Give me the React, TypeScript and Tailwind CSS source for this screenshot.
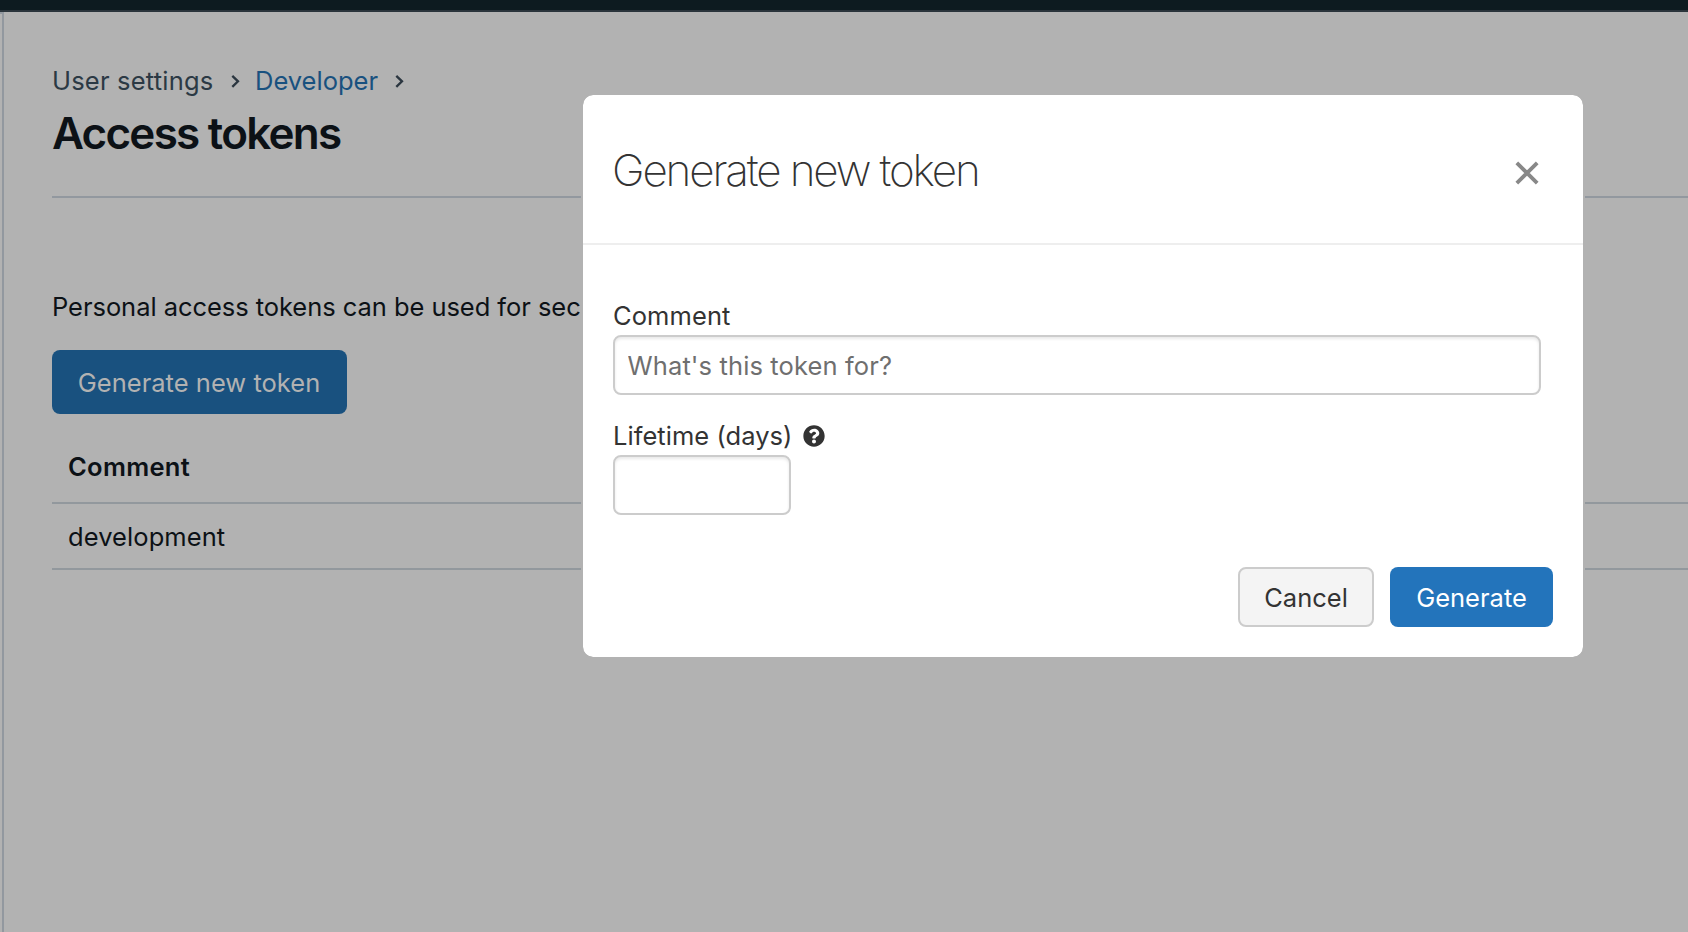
import { FaQuestionCircle } from "react-icons/fa";

function Chevron() {
  return (
    <svg className="block h-[14px] w-[10px]" viewBox="0 0 10 14" fill="none" stroke="#2b3640" strokeWidth="2.3">
      <path d="M1.3 1.8L7 7.3L1.3 12.8" />
    </svg>
  );
}

function Page() {
  return (
    <div className="flex h-full flex-col">
      <div className="h-3 shrink-0 border-b-2 border-[#2a343b] bg-[#0d1b20]" />
      <div className="flex min-h-0 flex-1">
        <aside className="w-1 shrink-0 border-t-2 border-r-2 border-[#92989f]" />
        <main className="flex flex-1 flex-col">
          <nav className="mt-[50px] flex h-[38px] items-center pl-12 text-[25.5px] text-[#2b3944]">
            <span className="w-[179px] tracking-[0.2px]">User settings</span>
            <Chevron />
            <a className="ml-[14px] w-[140px] text-[#19517f]">Developer</a>
            <Chevron />
          </nav>
          <h1 className="mt-[7px] ml-12 h-[52px] text-[44px] leading-[52px] font-semibold tracking-[-1.75px]">
            Access tokens
          </h1>
          <div className="mt-[37px] ml-12 h-0.5 bg-[#92989f]" />
          <p className="mt-[90px] ml-12 h-[38px] text-[25.5px] leading-[38px] whitespace-nowrap tracking-[-0.05px]">
            Personal access tokens can be used for sec
          </p>
          <button className="mt-6 ml-[47.5px] flex h-16 w-[295px] items-center justify-center self-start rounded-lg bg-[#19517f] pt-0.5 text-[25.5px] tracking-[0.02px] text-[#b2b2b2]">
            Generate new token
          </button>
          <div className="mt-[18px] ml-[47.5px] h-[72px] border-b-2 border-[#92989d] pl-[16.5px] text-[25.5px] leading-[70px] font-semibold tracking-[0.3px]">
            Comment
          </div>
          <div className="ml-[47.5px] h-[66px] border-b-2 border-[#92989d] pl-[16.5px] text-[25.5px] leading-[66px] tracking-[0.08px]">
            development
          </div>
        </main>
      </div>
    </div>
  );
}

function Dialog() {
  return (
    <section
      role="dialog"
      className="absolute top-[95px] left-[583px] flex h-[562px] w-[1000px] flex-col rounded-[10px] bg-white text-[25.5px] text-[#333] outline-2 outline-[#b2b2b2]"
    >
      <header className="flex h-[150px] shrink-0 items-center justify-between border-b-2 border-[#eee] pr-[44px] pl-[29px]">
        <h2 className="pt-0.5 text-[44px] font-extralight tracking-[-2.15px]">Generate new token</h2>
        <svg className="mt-2 h-6 w-6" viewBox="0 0 24 24" fill="none" stroke="#888" strokeWidth="3.8">
          <path d="M1.8 1.8L22.2 22.2M22.2 1.8L1.8 22.2" />
        </svg>
      </header>
      <div className="flex flex-col px-[30px] pt-[52px]">
        <label className="h-[38px] leading-[38px] tracking-[0.1px]">Comment</label>
        <input
          className="h-[60px] w-[928px] rounded-lg border-2 border-[#ccc] px-[12.5px] tracking-[0.12px] shadow-[inset_0_2px_3px_rgba(0,0,0,0.09)] outline-none placeholder:text-[#6f6f6f]"
          placeholder="What's this token for?"
        />
        <label className="mt-[22px] flex h-[38px] items-center tracking-[0.05px]">
          <span className="w-[190px]">Lifetime (days)</span>
          <FaQuestionCircle className="size-[22px]" />
        </label>
        <input className="h-[60px] w-[178px] rounded-lg border-2 border-[#ccc] shadow-[inset_0_2px_3px_rgba(0,0,0,0.09)] outline-none" />
        <div className="mt-[52px] flex justify-end gap-4">
          <button className="h-[60px] w-[136px] rounded-lg border-2 border-[#ccc] bg-[#f4f4f4] pt-0.5">Cancel</button>
          <button className="h-[60px] w-[163px] rounded-lg bg-[#2374bb] pt-0.5 text-white">Generate</button>
        </div>
      </div>
    </section>
  );
}

export default function App() {
  return (
    <div className="relative h-[932px] w-[1688px] overflow-hidden bg-[#b2b2b2] font-['Inter',sans-serif] text-[#0c1116]">
      <Page />
      <Dialog />
    </div>
  );
}
